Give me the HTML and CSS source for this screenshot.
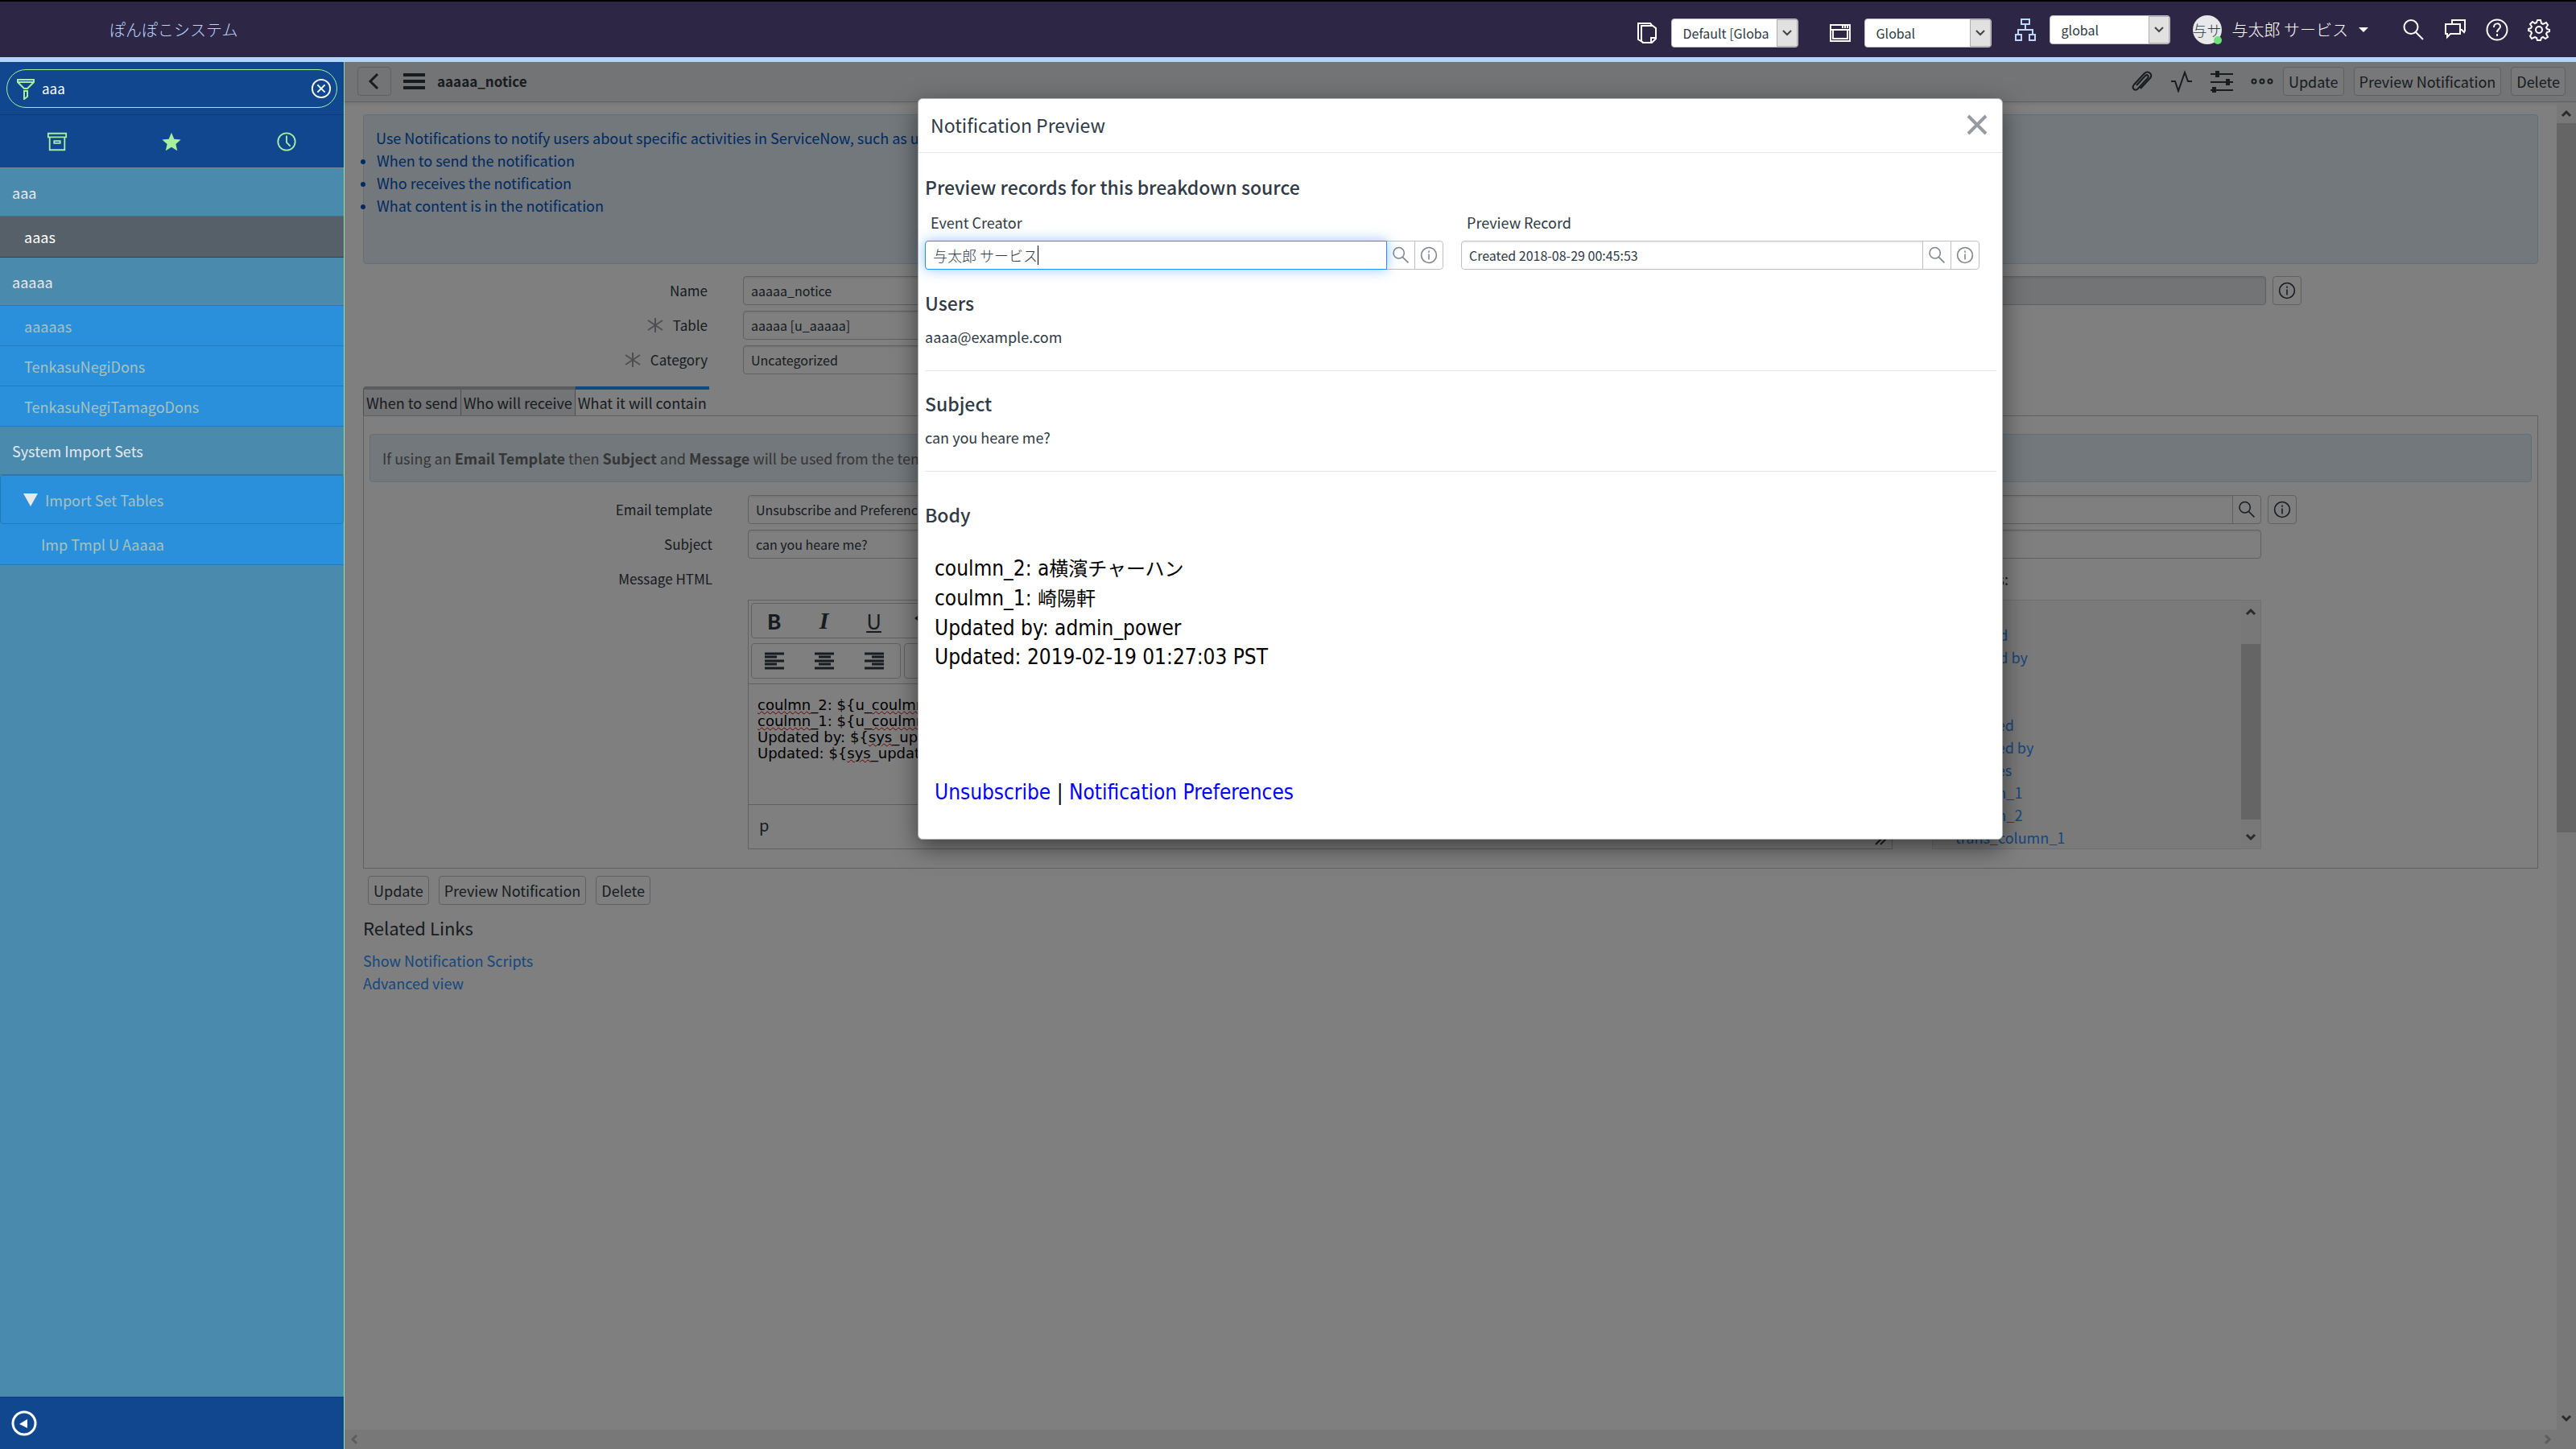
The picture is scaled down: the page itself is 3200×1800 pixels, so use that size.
FILE: index.html
```html
<!DOCTYPE html>
<html lang="ja">
<head>
    <meta charset="UTF-8">
    <meta name="viewport" content="width=device-width, initial-scale=1.0">
    <title>aaaaa_notice</title>
    <link rel="stylesheet" href="styles.css">
</head>
<body>
    <!-- Shared icons -->
    <svg class="sprite" aria-hidden="true">
        <symbol id="i-search" viewBox="0 0 28 28"><circle cx="11" cy="10.500" r="8.500"/><path d="M17 17l9 9"/></symbol>
        <symbol id="i-info" viewBox="0 0 28 28"><circle cx="14" cy="14" r="12"/><path d="M14 12v9M14 7v3"/></symbol>
        <symbol id="i-down" viewBox="0 0 16 16"><path d="M3 5l5 5 5-5"/></symbol>
        <symbol id="i-up" viewBox="0 0 16 16"><path d="M3 11l5-5 5 5"/></symbol>
        <symbol id="i-required" viewBox="0 0 20 20"><path d="M10 1v18M1 4l18 12M1 16l18-12"/></symbol>
    </svg>

    <header class="topbar">
        <h1 class="brand">ぽんぽこシステム</h1>
        <div class="pickers">
            <div class="picker">
                <svg class="icon" viewBox="0 0 28 28"><path d="M8 25l-5-3V2h15l2 2"/><path d="M7 5h14l4 3v13l-5 5H9l-2-2z"/><path d="M19 26v-6h6"/></svg>
                <span class="picker-select">
                    <select aria-label="Update set"><option>Default [Global]</option></select>
                    <span class="picker-arrow"><svg viewBox="0 0 16 16"><use href="#i-down"/></svg></span>
                </span>
            </div>
            <div class="picker">
                <svg class="icon" viewBox="0 0 28 28"><path d="M2 4h24v20H2zM2 10h24M5 10v11h18V10M17 5v3M20 5v3M23 5v3"/></svg>
                <span class="picker-select">
                    <select aria-label="Application"><option>Global</option></select>
                    <span class="picker-arrow"><svg viewBox="0 0 16 16"><use href="#i-down"/></svg></span>
                </span>
            </div>
        </div>
        <div class="picker picker-domain">
            <svg class="icon" viewBox="0 0 28 28"><path d="M9 1h10v6H9zM14 7v7M5 20v-6h18v6M2 20h7v7H2zM19 20h7v7h-7z"/></svg>
            <span class="picker-select">
                <select aria-label="Domain"><option>global</option></select>
                <span class="picker-arrow"><svg viewBox="0 0 16 16"><use href="#i-down"/></svg></span>
            </span>
        </div>
        <button class="user" type="button">
            <span class="avatar"><span>与サ</span></span>
            与太郎 サービス
            <span class="caret"></span>
        </button>
        <nav class="tools">
            <button type="button" aria-label="Search"><svg class="icon" viewBox="0 0 28 28"><use href="#i-search"/></svg></button>
            <button type="button" aria-label="Chat"><svg class="icon" viewBox="0 0 28 28"><path d="M10 6V2h16v13l-1 2-3-3h-1"/><path d="M2 7h18v12H8l-4 4v-4H2z"/></svg></button>
            <button type="button" aria-label="Help"><svg class="icon" viewBox="0 0 28 28"><circle cx="14" cy="14" r="12.500"/><path d="M10 11c0-6 8-6 8-1 0 3-4 3-4 7M14 19v3"/></svg></button>
            <button type="button" aria-label="Settings"><svg class="icon" viewBox="0 0 28 28"><circle cx="14" cy="14" r="4"/><path d="M12 2h4l1 4 2 1 4-2 2 3-2 3 1 2 3 1v2l-3 1-1 2 2 4-3 2-3-2-2 1-1 3h-4l-1-3-2-1-4 2-2-3 2-4-1-2-3-1v-2l3-1 1-2-2-3 3-3 3 2 2-1z"/></svg></button>
        </nav>
    </header>

    <div class="page">
        <aside class="sidebar">
            <div class="filter">
                <label class="filter-box">
                    <svg viewBox="0 0 24 28"><path d="M2 3h20v3l-8 8h-4L2 6zM2 6h20M10 17h4v7l-4 3z"/></svg>
                    <input type="text" value="aaa" aria-label="Filter navigator">
                    <svg class="clear" viewBox="0 0 28 28"><circle cx="14" cy="14" r="12"/><path d="M9 9l10 10M19 9L9 19"/></svg>
                </label>
            </div>
            <div class="nav-tabs">
                <button type="button" aria-label="All applications"><svg viewBox="0 0 28 28"><path d="M2 3h24v5H2zM4 8v17h20V8M10 13h8v3h-8z"/></svg></button>
                <button type="button" aria-label="Favorites"><svg class="solid" viewBox="0 0 28 28"><path d="M14 2l3.600 8.400 8.900.8-6.700 6 2 8.800L14 21.300 6.200 26l2-8.800-6.700-6 8.900-.8z"/></svg></button>
                <button type="button" aria-label="History"><svg viewBox="0 0 28 28"><circle cx="14" cy="14" r="11.500"/><path d="M14 6v9l5 5"/></svg></button>
            </div>
            <nav class="nav-list">
                <a class="app" href="#">aaa</a>
                <a class="module current" href="#">aaas</a>
                <a class="app" href="#">aaaaa</a>
                <a class="module" href="#">aaaaas</a>
                <a class="module" href="#">TenkasuNegiDons</a>
                <a class="module" href="#">TenkasuNegiTamagoDons</a>
                <a class="app" href="#">System Import Sets</a>
                <a class="module group" href="#"><span class="triangle"></span>Import Set Tables</a>
                <a class="module child" href="#">Imp Tmpl U Aaaaa</a>
            </nav>
            <div class="sidebar-foot">
                <button type="button" aria-label="Collapse"><svg viewBox="0 0 32 32"><circle cx="16" cy="16" r="14"/><path class="fill" d="M20 11v11l-10-5z"/></svg></button>
            </div>
        </aside>

        <main class="main">
            <div class="form-head">
                <button class="btn back" type="button" aria-label="Back"><svg viewBox="0 0 20 24"><path d="M14 3L5 12l9 9"/></svg></button>
                <button class="menu" type="button" aria-label="Menu"><span></span><span></span><span></span></button>
                <h2 class="form-title">aaaaa_notice</h2>
                <div class="form-tools">
                    <svg viewBox="0 0 28 28"><path d="M8 19L19 7c2-2 5 0 3 3L10 23c-3 4-9 0-5-5L18 4c5-4 11 2 7 6L13 23"/></svg>
                    <svg viewBox="0 0 28 28"><path d="M1 14h5l4 12L18 3l4 11h5"/></svg>
                    <svg viewBox="0 0 28 28"><path d="M0 5h28M0 15h28M0 25h28"/><path class="fill" d="M6 1h5v8H6zM19 11h5v8h-5zM2 21h5v8H2z"/></svg>
                    <svg viewBox="0 0 28 28"><circle cx="4" cy="14" r="2.500"/><circle cx="14" cy="14" r="2.500"/><circle cx="24" cy="14" r="2.500"/></svg>
                </div>
                <div class="actions">
                    <button class="btn" type="button">Update</button>
                    <button class="btn" type="button">Preview Notification</button>
                    <button class="btn" type="button">Delete</button>
                </div>
            </div>

            <div class="scroll-area">
                <div class="form">
                    <div class="note note-top">
                        <p>Use Notifications to notify users about specific activities in ServiceNow, such as updates</p>
                        <ul>
                            <li>When to send the notification</li>
                            <li>Who receives the notification</li>
                            <li>What content is in the notification</li>
                        </ul>
                    </div>

                    <div class="columns">
                        <div class="fields">
                            <div class="row"><label for="name">Name</label><input class="text" id="name" type="text" value="aaaaa_notice"></div>
                            <div class="row"><label for="table"><svg class="required"><use href="#i-required"/></svg>Table</label><select class="text" id="table"><option>aaaaa [u_aaaaa]</option></select></div>
                            <div class="row"><label for="category"><svg class="required"><use href="#i-required"/></svg>Category</label><input class="text" id="category" type="text" value="Uncategorized"></div>
                        </div>
                        <div class="fields">
                            <div class="row">
                                <label for="app">Application</label>
                                <input class="text" id="app" type="text" value="Global" readonly>
                                <button class="btn square" type="button" aria-label="Application info"><svg><use href="#i-info"/></svg></button>
                            </div>
                        </div>
                    </div>

                    <div class="tabs">
                        <button class="tab" type="button">When to send</button>
                        <button class="tab" type="button">Who will receive</button>
                        <button class="tab active" type="button">What it will contain</button>
                    </div>
                    <section class="panel">
                        <div class="note">If using an <b>Email Template</b> then <b>Subject</b> and <b>Message</b> will be used from the template</div>
                        <div class="fields wide">
                            <div class="row">
                                <label for="template">Email template</label>
                                <div class="lookup">
                                    <input class="text" id="template" type="text" value="Unsubscribe and Preferences">
                                    <button class="btn square" type="button" aria-label="Look up template"><svg><use href="#i-search"/></svg></button>
                                </div>
                                <button class="btn square" type="button" aria-label="Template info"><svg><use href="#i-info"/></svg></button>
                            </div>
                            <div class="row">
                                <label for="subject">Subject</label>
                                <input class="text" id="subject" type="text" value="can you heare me?">
                            </div>
                            <div class="row">
                                <span class="label">Message HTML</span>
                                <span class="variables-label">Select variables:</span>
                            </div>
                        </div>
                        <div class="message">
                            <div class="editor">
                                <div class="toolbar">
                                    <div class="group group-long">
                                        <button class="bold" type="button">B</button>
                                        <button class="italic" type="button">I</button>
                                        <button class="underline" type="button">U</button>
                                        <button type="button" aria-label="Undo"><svg viewBox="0 0 24 24"><path class="fill" d="M0 9l9-7v4c8 0 12 5 11 13-2-5-5-7-11-7v4z"/></svg></button>
                                    </div>
                                    <div class="group">
                                        <button type="button" aria-label="Align left"><svg viewBox="0 0 24 24"><path d="M0 3h24M0 7h15M0 12h24M0 16h15M0 21h24"/></svg></button>
                                        <button type="button" aria-label="Align center"><svg viewBox="0 0 24 24"><path d="M0 3h24M5 7h15M0 12h24M5 16h15M0 21h24"/></svg></button>
                                        <button type="button" aria-label="Align right"><svg viewBox="0 0 24 24"><path d="M0 3h24M9 7h15M0 12h24M9 16h15M0 21h24"/></svg></button>
                                    </div>
                                    <div class="group">
                                        <button type="button" aria-label="List"><svg viewBox="0 0 24 24"><path d="M0 4h3M7 4h17M0 12h3M7 12h17M0 20h3M7 20h17"/></svg></button>
                                    </div>
                                </div>
                                <div class="editor-text">
                                    <u>coulmn</u>_2: ${u_<u>coulmn</u>_2}<br>
                                    <u>coulmn</u>_1: ${u_<u>coulmn</u>_1}<br>
                                    Updated by: ${<u>sys</u>_updated_by}<br>
                                    Updated: ${<u>sys</u>_updated_on}
                                </div>
                                <div class="editor-status">p<svg viewBox="0 0 16 16"><path d="M2 15L15 2M8 15l7-7"/></svg></div>
                            </div>
                            <div class="variables">
                                <div class="variables-list">
                                    <a href="#">Fields</a>
                                    <a href="#">Created</a>
                                    <a href="#">Created by</a>
                                    <a href="#">Class</a>
                                    <a href="#">Sys ID</a>
                                    <a href="#">Updated</a>
                                    <a href="#">Updated by</a>
                                    <a href="#">Updates</a>
                                    <a href="#">coulmn_1</a>
                                    <a href="#">coulmn_2</a>
                                    <a href="#">trans_column_1</a>
                                </div>
                                <div class="scrollbar">
                                    <svg><use href="#i-up"/></svg>
                                    <div class="track"><div class="thumb thumb-list"></div></div>
                                    <svg><use href="#i-down"/></svg>
                                </div>
                            </div>
                        </div>
                    </section>

                    <div class="actions actions-bottom">
                        <button class="btn" type="button">Update</button>
                        <button class="btn" type="button">Preview Notification</button>
                        <button class="btn" type="button">Delete</button>
                    </div>
                    <h3 class="related">Related Links</h3>
                    <a class="related-link" href="#">Show Notification Scripts</a>
                    <a class="related-link" href="#">Advanced view</a>
                </div>
                <div class="scrollbar">
                    <svg><use href="#i-up"/></svg>
                    <div class="track"><div class="thumb thumb-page"></div></div>
                    <svg><use href="#i-down"/></svg>
                </div>
            </div>
            <div class="scrollbar-x">
                <svg viewBox="0 0 16 16"><path d="M10 3L5 8l5 5"/></svg>
                <svg viewBox="0 0 16 16"><path d="M6 3l5 5-5 5"/></svg>
            </div>

            <!-- Preview dialog -->
            <div class="overlay">
                <div class="modal" role="dialog" aria-labelledby="modal-title">
                    <div class="modal-head">
                        <h2 id="modal-title">Notification Preview</h2>
                        <button type="button" aria-label="Close"><svg viewBox="0 0 26 26"><path d="M2 2l22 22M24 2L2 24"/></svg></button>
                    </div>
                    <div class="modal-body">
                        <h3>Preview records for this breakdown source</h3>
                        <div class="records">
                            <div class="record">
                                <label for="creator">Event Creator</label>
                                <div class="lookup">
                                    <div class="focus-wrap">
                                        <input class="text focused" id="creator" type="text" value="与太郎 サービス">
                                        <span class="cursor"></span>
                                    </div>
                                    <button class="btn square" type="button" aria-label="Look up user"><svg><use href="#i-search"/></svg></button>
                                    <button class="btn square" type="button" aria-label="User info"><svg><use href="#i-info"/></svg></button>
                                </div>
                            </div>
                            <div class="record">
                                <label for="record">Preview Record</label>
                                <div class="lookup">
                                    <input class="text" id="record" type="text" value="Created 2018-08-29 00:45:53">
                                    <button class="btn square" type="button" aria-label="Look up record"><svg><use href="#i-search"/></svg></button>
                                    <button class="btn square" type="button" aria-label="Record info"><svg><use href="#i-info"/></svg></button>
                                </div>
                            </div>
                        </div>
                        <section class="block">
                            <h3>Users</h3>
                            <p>aaaa@example.com</p>
                        </section>
                        <section class="block">
                            <h3>Subject</h3>
                            <p>can you heare me?</p>
                        </section>
                        <section class="mail">
                            <h3>Body</h3>
                            <div class="mail-text">
                                coulmn_2: a<span>横濱チャーハン</span><br>
                                coulmn_1: <span>崎陽軒</span><br>
                                Updated by: admin_power<br>
                                Updated: 2019-02-19 01:27:03 PST
                            </div>
                            <div class="mail-links"><a href="#">Unsubscribe</a> | <a href="#">Notification Preferences</a></div>
                        </section>
                    </div>
                </div>
            </div>
        </main>
    </div>
</body>
</html>
```
FILE: styles.css
```css
* {
    box-sizing: border-box;
}
body {
    margin: 0;
    height: 100vh;
    display: flex;
    flex-direction: column;
    overflow: hidden;
    font-family: "Noto Sans CJK JP", sans-serif;
    font-size: 18px;
    line-height: 28px;
    color: #2e3842;
    background-color: #fff;
}
h1, h2, h3, p, ul {
    margin: 0;
    padding: 0;
}
a {
    text-decoration: none;
    color: #2890ff;
}
button, input, select {
    font-family: inherit;
    font-size: inherit;
    line-height: inherit;
    color: inherit;
    margin: 0;
}
button {
    padding: 0;
    border: none;
    background: none;
}
svg {
    display: block;
    flex-shrink: 0;
    fill: none;
    stroke: currentColor;
    stroke-width: 2;
}
.fill {
    fill: currentColor;
    stroke: none;
}
.sprite {
    position: absolute;
    width: 0;
    height: 0;
}

/* Top bar */
.topbar {
    display: flex;
    align-items: center;
    height: 77px;
    padding: 0 32px 0 136px;
    border-top: 2px solid #000;
    border-bottom: 6px solid #b3d5ff;
    background-color: #2d2644;
    color: #fff;
}
.brand {
    flex: 1;
    font-size: 20px;
    font-weight: 300;
    color: #bcd6ff;
}
.icon {
    width: 28px;
    height: 28px;
}
.pickers {
    display: flex;
    gap: 38px;
    padding-top: 8px;
}
.picker {
    display: flex;
    align-items: center;
    gap: 16px;
}
.picker-domain {
    margin: 0 28px;
}
.picker-domain .icon {
    color: #bcd6ff;
}
.picker-select {
    position: relative;
    width: 158px;
}
.picker-select select {
    display: block;
    width: 100%;
    height: 36px;
    padding: 0 36px 0 14px;
    border: 1px solid #bdc0c4;
    border-radius: 4px;
    appearance: none;
    background-color: #fff;
    color: #2e3842;
    font-size: 16px;
}
.picker-domain .picker-select {
    width: 150px;
}
.picker-arrow {
    position: absolute;
    top: 1px;
    right: 1px;
    bottom: 1px;
    width: 26px;
    display: flex;
    align-items: center;
    justify-content: center;
    border: 1px solid #adadad;
    background-color: #e1e1e1;
    color: #444;
    pointer-events: none;
}
.picker-arrow svg {
    width: 16px;
    height: 16px;
}
.user {
    display: flex;
    align-items: center;
    gap: 13px;
    font-size: 20px;
    font-weight: 300;
}
.avatar {
    position: relative;
    width: 36px;
    height: 36px;
    border-radius: 50%;
    background-color: #e6e8ea;
    color: #2e3842;
    font-size: 18px;
    line-height: 36px;
    white-space: nowrap;
}
.avatar::after {
    content: "";
    position: absolute;
    right: 0;
    bottom: 0;
    width: 10px;
    height: 10px;
    border-radius: 50%;
    background-color: #71e279;
}
.caret {
    border: 6px solid transparent;
    border-top-color: #fff;
    border-bottom: none;
}
.tools {
    display: flex;
    gap: 24px;
    margin-left: 42px;
}

/* Navigator */
.page {
    flex: 1;
    display: flex;
    min-height: 0;
}
.sidebar {
    display: flex;
    flex-direction: column;
    width: 428px;
    border-right: 1px solid #8ee6a0;
    background-color: #4a8aad;
}
.filter {
    padding: 9px 8px 8px;
    border-bottom: 1px solid #0f3a75;
    background-color: #11478f;
}
.filter-box {
    display: flex;
    align-items: center;
    gap: 8px;
    height: 48px;
    padding: 0 6px 0 11px;
    border: 1px solid #a6f0a0;
    border-radius: 24px;
    color: #a9ee9f;
}
.filter-box svg {
    width: 24px;
    height: 28px;
}
.filter-box input {
    flex: 1;
    min-width: 0;
    padding: 0;
    border: none;
    outline: none;
    background: none;
    color: #fff;
    font-size: 17px;
}
.filter-box .clear {
    width: 26px;
    height: 26px;
    color: #fff;
}
.nav-tabs {
    display: grid;
    grid-template-columns: repeat(3, 1fr);
    height: 66px;
    border-bottom: 1px solid #7d8790;
    background-color: #11478f;
    color: #a9ee9f;
}
.nav-tabs button {
    display: flex;
    align-items: center;
    justify-content: center;
}
.nav-tabs svg {
    width: 26px;
    height: 26px;
}
.nav-tabs .solid {
    fill: currentColor;
    stroke: none;
}
.nav-list {
    flex: 1;
}
.nav-list a {
    display: flex;
    align-items: center;
    border-bottom: 1px solid #3d7594;
    color: #e8e8ea;
}
.nav-list .app {
    height: 60px;
    padding-left: 15px;
}
.nav-list .module {
    height: 50px;
    padding-left: 30px;
    border-color: #2279bd;
    background-color: #2a90dc;
    color: #a7c2bd;
}
.nav-list .current {
    height: 51px;
    border-color: #36424b;
    background-color: #566069;
    color: #fff;
}
.nav-list .group {
    height: 61px;
    gap: 9px;
    padding-left: 28px;
}
.nav-list .child {
    height: 51px;
    padding-left: 51px;
}
.triangle {
    border: 9px solid transparent;
    border-top: 16px solid #e8e8ea;
    border-bottom: none;
}
.sidebar-foot {
    display: flex;
    align-items: center;
    height: 65px;
    padding-left: 14px;
    border-top: 1px solid #0f3a75;
    background-color: #11478f;
    color: #fff;
}
.sidebar-foot svg {
    width: 32px;
    height: 32px;
    stroke-width: 3;
}

/* Form */
.main {
    position: relative;
    flex: 1;
    display: flex;
    flex-direction: column;
    min-width: 0;
}
.form-head {
    display: flex;
    align-items: center;
    height: 50px;
    padding: 0 13px 1px 16px;
    border-bottom: 1px solid #bdc0c4;
    box-shadow: 0 2px 4px rgba(0, 0, 0, 0.1);
    background-color: #e6e8ea;
}
.btn {
    display: flex;
    align-items: center;
    justify-content: center;
    height: 36px;
    padding: 0 6px;
    border: 1px solid #bdc0c4;
    border-radius: 4px;
}
.form-head .btn {
    background-color: #f0f1f2;
}
.form-head .back {
    width: 42px;
    background-color: #e6e8ea;
}
.back svg {
    width: 20px;
    height: 24px;
    stroke-width: 3;
}
.menu {
    display: grid;
    gap: 4px;
    width: 27px;
    margin: 0 15px;
}
.menu span {
    height: 4px;
    background-color: #2e3842;
}
.form-title {
    flex: 1;
    font-size: 17px;
    font-weight: 700;
}
.form-tools {
    display: flex;
    gap: 22px;
    margin-right: 12px;
}
.form-tools svg {
    width: 28px;
    height: 28px;
}
.actions {
    display: flex;
    gap: 12px;
}
.scroll-area {
    flex: 1;
    display: flex;
    min-height: 0;
}
.form {
    flex: 1;
    min-width: 0;
    padding: 15px 23px 0;
}
.note {
    border: 1px solid #c5def2;
    border-radius: 4px;
    background-color: #e4f0f8;
    color: #6c6c6c;
}
.note-top {
    height: 186px;
    padding: 14px 15px;
    color: #0054c4;
}
.note-top li {
    padding-left: 1px;
}
.note-top li::marker {
    font-size: 16px;
}
.columns {
    display: grid;
    grid-template-columns: 1fr 1fr;
    margin: 15px 0;
}
.fields {
    display: grid;
    gap: 7px;
    align-content: start;
}
.row {
    display: grid;
    grid-template-columns: 428px 1fr 36px;
    column-gap: 8px;
    padding-right: 294px;
    min-height: 36px;
}
.row label, .row .label {
    display: flex;
    align-items: center;
    justify-content: flex-end;
    gap: 12px;
    font-size: 17px;
}
.row > :nth-child(2) {
    margin-left: 36px;
}
.required {
    width: 20px;
    height: 20px;
    color: #98a0a8;
}
.text {
    width: 100%;
    height: 36px;
    padding: 0 9px;
    border: 1px solid #bdc0c4;
    border-radius: 4px;
    box-shadow: inset 0 2px 2px rgba(0, 0, 0, 0.06);
    appearance: none;
    outline: none;
    background-color: #fff;
    font-size: 16px;
}
.row .text {
    width: auto;
}
.text[readonly] {
    background-color: #e6e8ea;
}
.square {
    width: 36px;
    padding: 0;
}
.square svg {
    width: 22px;
    height: 22px;
}
.lookup {
    display: flex;
}
.lookup .text {
    flex: 1;
    border-radius: 4px 0 0 4px;
}
.lookup .btn {
    margin-left: -1px;
    border-radius: 0;
}
.lookup .btn:last-child {
    border-radius: 0 4px 4px 0;
}
.tabs {
    display: flex;
}
.tab {
    height: 36px;
    padding: 0 3px;
    border-top: 4px solid #b8b8b8;
    border-right: 1px solid #9a9da0;
    background-color: #e6e8ea;
}
.tab:first-child {
    border-left: 1px solid #9a9da0;
    border-radius: 4px 0 0 0;
}
.tab.active {
    border-top-color: #278efc;
    border-right: none;
    background-color: #fff;
}
.panel {
    padding: 22px 7px 23px;
    border: 1px solid #bdc0c4;
}
.panel .note {
    margin-bottom: 16px;
    padding: 15px;
}
.wide .row {
    grid-template-columns: 426px 1fr 36px;
    padding-right: 292px;
}
.row .variables-label {
    display: flex;
    align-items: center;
    justify-content: flex-end;
    padding-right: 314px;
}
.message {
    display: flex;
    gap: 49px;
    margin: 8px 336px 0 470px;
}
.editor {
    flex: 1;
    border: 1px solid #bdc0c4;
}
.toolbar {
    display: flex;
    flex-wrap: wrap;
    gap: 6px 4px;
    padding: 3px 3px 6px;
    border-bottom: 1px solid #bdc0c4;
}
.group {
    display: flex;
    gap: 7px;
    height: 44px;
    padding-right: 5px;
    border: 1px solid #bdc0c4;
    border-radius: 4px;
}
.group-long {
    width: 100%;
}
.group button {
    display: flex;
    align-items: center;
    justify-content: center;
    width: 55px;
    font-size: 26px;
}
.group svg {
    width: 24px;
    height: 24px;
    stroke-width: 3;
}
.bold {
    font-weight: 700;
}
.group .italic {
    font-family: "Liberation Serif", serif;
    font-style: italic;
    font-weight: 700;
    font-size: 30px;
}
.underline {
    text-decoration: underline;
}
.editor-text {
    height: 149px;
    padding: 16px 11px;
    font-family: "DejaVu Sans", sans-serif;
    font-size: 18px;
    line-height: 20px;
    color: #000;
}
.editor-text u {
    text-decoration: underline wavy #c00 1px;
}
.editor-status {
    display: flex;
    justify-content: space-between;
    align-items: center;
    height: 55px;
    padding: 0 6px 4px 13px;
    border-top: 1px solid #bdc0c4;
    font-size: 20px;
}
.editor-status svg {
    align-self: flex-end;
    width: 16px;
    height: 16px;
}
.variables {
    display: flex;
    width: 409px;
    border: 1px solid #e0e0e0;
    background-color: #f5f5f5;
}
.variables-list {
    flex: 1;
    padding: 0 28px;
}
.variables-list a {
    display: block;
}
.scrollbar {
    display: flex;
    flex-direction: column;
    align-items: center;
    width: 24px;
    padding: 6px 0;
    background-color: #f0f0f0;
    color: #555;
}
.scrollbar svg, .scrollbar-x svg {
    width: 16px;
    height: 16px;
    stroke-width: 3;
}
.track {
    flex: 1;
    width: 100%;
    padding-top: 4px;
}
.thumb {
    background-color: #cbcbcb;
}
.thumb-list {
    height: 84%;
    margin-top: 28px;
}
.thumb-page {
    height: 55%;
}
.scrollbar-x {
    display: flex;
    align-items: center;
    justify-content: space-between;
    height: 24px;
    padding: 0 28px 0 5px;
    background-color: #f0f0f0;
    color: #bbb;
}
.actions-bottom {
    padding: 9px 6px 14px;
}
.related {
    margin-bottom: 13px;
    font-size: 22px;
    font-weight: 400;
}
.related-link {
    display: block;
    width: max-content;
}

/* Preview dialog */
.overlay {
    position: absolute;
    inset: 0;
    padding-top: 45px;
    background-color: rgba(0, 0, 0, 0.5);
}
.modal {
    width: 1348px;
    max-width: 100%;
    margin: 0 auto;
    border: 1px solid #b0b4b8;
    border-radius: 6px;
    box-shadow: 0 10px 30px rgba(0, 0, 0, 0.5);
    background-color: #fff;
    color: #303a46;
}
.modal-head {
    display: flex;
    align-items: center;
    justify-content: space-between;
    height: 67px;
    padding: 0 18px 3px 15px;
    border-bottom: 1px solid #e5e5e5;
}
.modal-head h2 {
    font-size: 23px;
    font-weight: 400;
}
.modal-head svg {
    width: 26px;
    height: 26px;
    stroke-width: 4;
    color: #959ba1;
}
.modal-body {
    padding: 28px 7px 40px 8px;
}
.modal-body h3 {
    font-size: 23px;
    font-weight: 500;
}
.records {
    display: flex;
    gap: 22px;
    margin: 16px 0 27px;
}
.record {
    width: 644px;
}
.record label {
    display: block;
    margin-bottom: 9px;
    padding-left: 7px;
}
.record .square {
    color: #7d858c;
}
.focus-wrap {
    position: relative;
    flex: 1;
    display: flex;
}
.record .focused {
    border-color: #278efc;
    box-shadow: 0 0 16px rgba(39, 142, 252, 0.5);
    font-size: 18px;
    font-weight: 300;
}
.cursor {
    position: absolute;
    left: 140px;
    top: 6px;
    width: 1px;
    height: 24px;
    background-color: #000;
}
.block {
    padding-bottom: 28px;
    margin-bottom: 26px;
    border-bottom: 1px solid #e5e5e5;
}
.block p {
    margin-top: 14px;
}
.mail {
    padding-top: 13px;
}
.mail-text, .mail-links {
    margin-top: 35px;
    padding-left: 12px;
    font-family: "DejaVu Sans Condensed", "Noto Sans CJK JP", sans-serif;
    font-size: 26px;
    line-height: 36px;
    color: #000;
}
.mail-text span {
    font-size: 24px;
}
.mail-links {
    margin-top: 132px;
}
.mail-links a {
    color: #00f;
}
```
